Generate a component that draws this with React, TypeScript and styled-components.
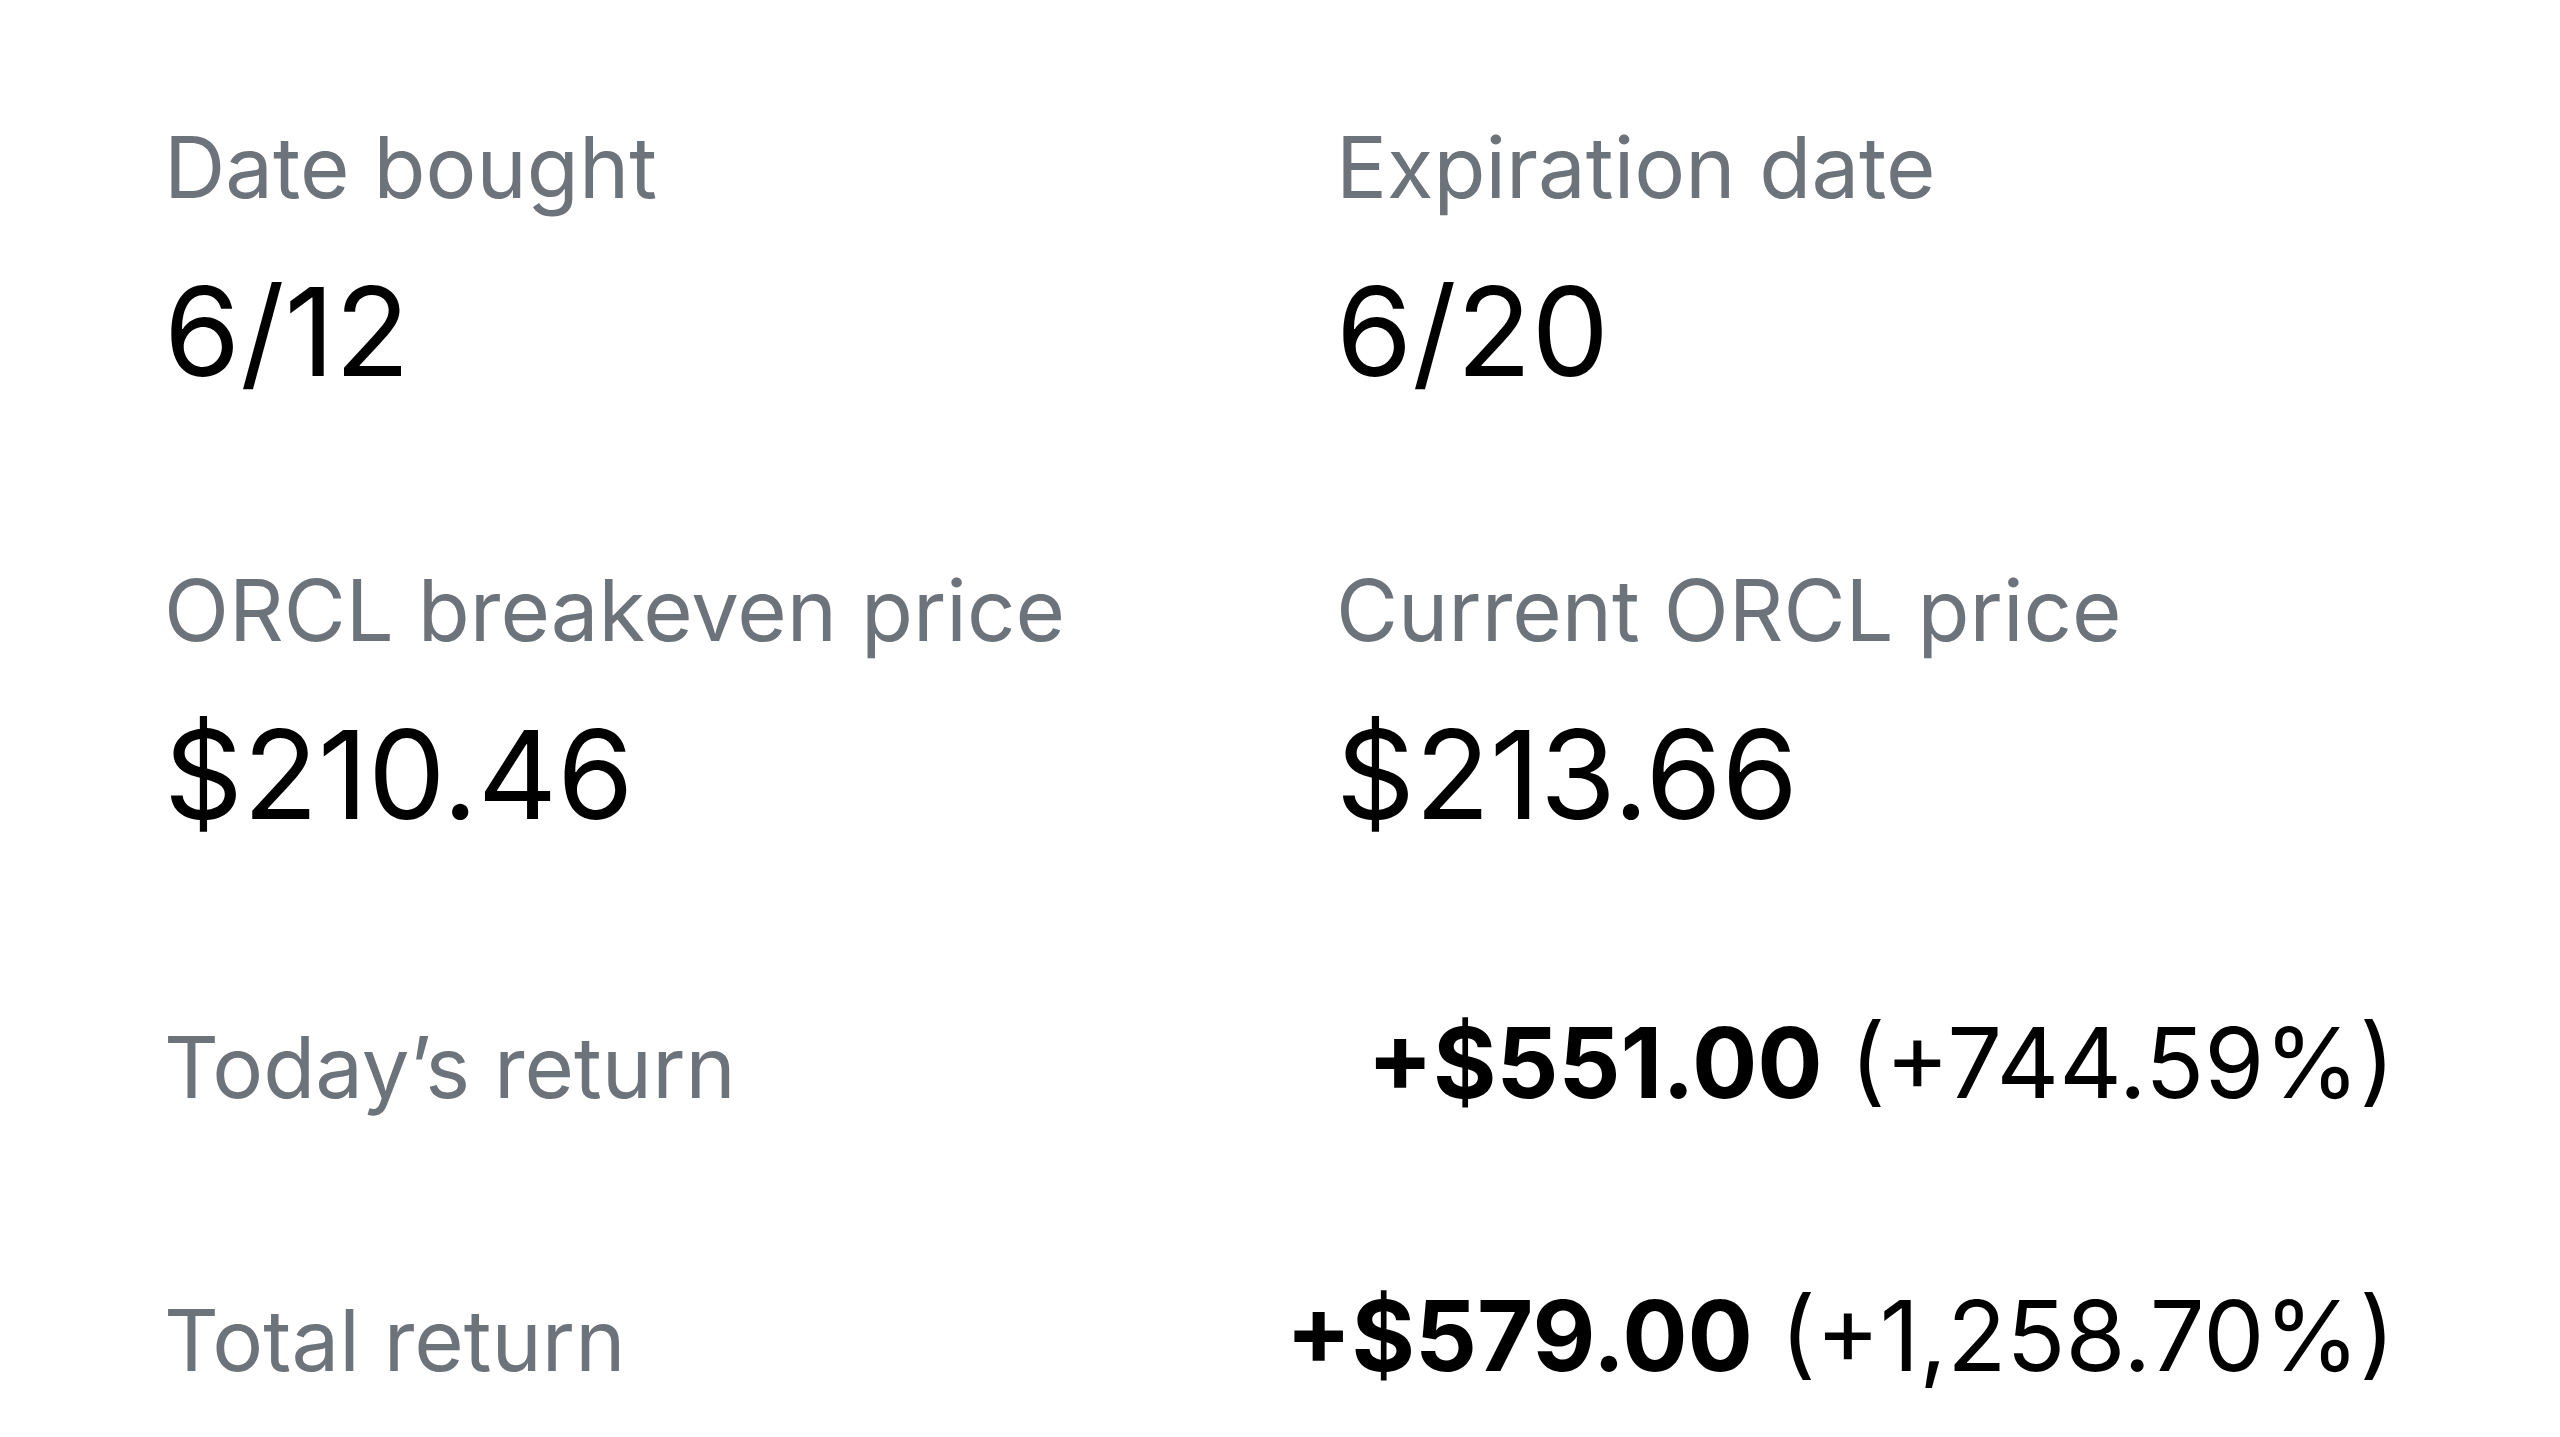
import React from "react";
import styled, { createGlobalStyle } from "styled-components";

const GlobalStyle = createGlobalStyle`
    html, body {
        margin: 0;
        padding: 0;
        background: #ffffff;
    }
    body {
        font-family: Inter, "Liberation Sans", Arial, sans-serif;
        -webkit-font-smoothing: antialiased;
    }
`;

const Panel = styled.div`
    box-sizing: border-box;
    width: 2560px;
    min-height: 1437px;
    padding: 118px 165px 0 164px;
    background: #ffffff;
`;

const StatsGrid = styled.div`
    display: grid;
    grid-template-columns: 1172px 1fr;
    row-gap: 159px;
`;

const Stat = styled.div`
    display: flex;
    flex-direction: column;
    gap: 44px;
`;

const Label = styled.span`
    font-size: 85px;
    line-height: 100px;
    font-weight: 400;
    color: #6d737a;
    white-space: nowrap;
`;

const Value = styled.span`
    font-size: 123px;
    line-height: 140px;
    font-weight: 400;
    color: #000000;
    white-space: nowrap;
`;

const Returns = styled.div`
    display: flex;
    flex-direction: column;
    gap: 153px;
    margin-top: 158px;
`;

const ReturnRow = styled.div`
    display: flex;
    align-items: baseline;
    justify-content: space-between;
`;

const ReturnValue = styled.span`
    font-size: 97px;
    line-height: 120px;
    color: #000000;
    white-space: nowrap;
`;

const Amount = styled.strong`
    font-weight: 700;
`;

interface StatItem {
    label: string;
    value: string;
}

interface ReturnItem {
    label: string;
    amount: string;
    percent: string;
}

const stats: StatItem[] = [
    { label: "Date bought", value: "6/12" },
    { label: "Expiration date", value: "6/20" },
    { label: "ORCL breakeven price", value: "$210.46" },
    { label: "Current ORCL price", value: "$213.66" },
];

const returns: ReturnItem[] = [
    { label: "Today’s return", amount: "+$551.00", percent: "(+744.59%)" },
    { label: "Total return", amount: "+$579.00", percent: "(+1,258.70%)" },
];

const App = () => {
    return (
        <>
            <GlobalStyle />
            <Panel>
                <StatsGrid>
                    {stats.map((item) => (
                        <Stat key={item.label}>
                            <Label>{item.label}</Label>
                            <Value>{item.value}</Value>
                        </Stat>
                    ))}
                </StatsGrid>
                <Returns>
                    {returns.map((item) => (
                        <ReturnRow key={item.label}>
                            <Label>{item.label}</Label>
                            <ReturnValue>
                                <Amount>{item.amount}</Amount> {item.percent}
                            </ReturnValue>
                        </ReturnRow>
                    ))}
                </Returns>
            </Panel>
        </>
    );
};

export default App;
